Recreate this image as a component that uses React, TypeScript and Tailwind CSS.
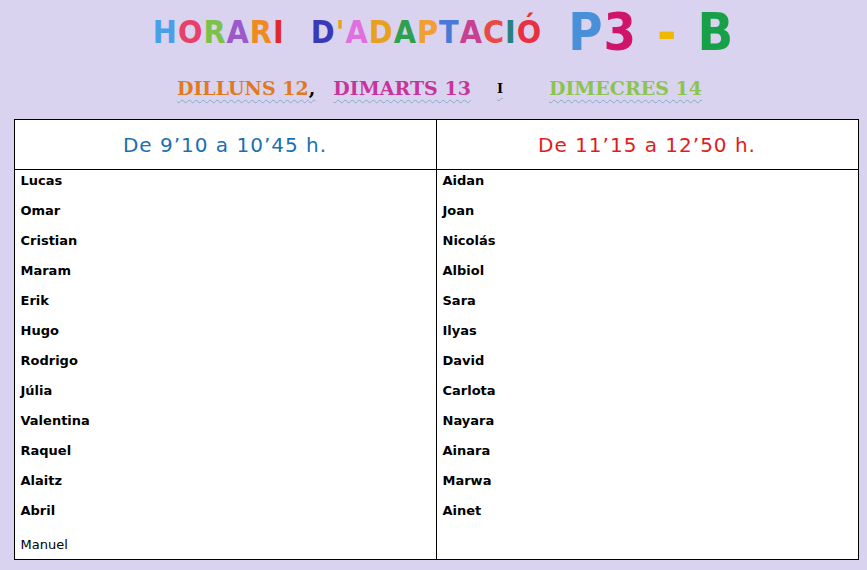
const title1: [string, string][] = [
  ["H", "#4aa0e8"], ["O", "#e8406a"], ["R", "#7cc24a"], ["A", "#9b59c9"], ["R", "#f08a20"], ["I", "#e02828"],
];
const title2: [string, string][] = [
  ["D", "#3a3ab8"], ["'", "#e8a020"], ["A", "#e070e0"], ["D", "#e8a020"], ["A", "#2ea050"], ["P", "#f0a030"],
  ["T", "#4a7ad8"], ["A", "#c84090"], ["C", "#e84a4a"], ["I", "#2a8080"], ["Ó", "#e83040"],
];

const left = ["Lucas", "Omar", "Cristian", "Maram", "Erik", "Hugo", "Rodrigo", "Júlia", "Valentina", "Raquel", "Alaitz", "Abril"];
const right = ["Aidan", "Joan", "Nicolás", "Albiol", "Sara", "Ilyas", "David", "Carlota", "Nayara", "Ainara", "Marwa", "Ainet"];

const Word = ({ letters }: { letters: [string, string][] }) => (
  <span className="flex">
    {letters.map(([l, c], i) => (
      <span key={i} style={{ color: c }}>{l}</span>
    ))}
  </span>
);

export default function App() {
  return (
    <div className="w-[867px] h-[570px] bg-[#d9d3ef] overflow-hidden flex flex-col items-center" style={{ fontFamily: '"DejaVu Sans", sans-serif' }}>
      <div className="h-[62px] flex items-end gap-[26px] pb-[6px] pl-[20px] font-bold text-[32px] tracking-[1px]" style={{ fontFamily: '"DejaVu Sans Condensed", "DejaVu Sans", sans-serif' }}>
        <Word letters={title1} />
        <Word letters={title2} />
        <span className="flex items-end gap-[20px] text-[52px] leading-[56px] -mb-[4px]">
          <span className="flex"><span className="text-[#4a90d8]">P</span><span className="text-[#d0146a]">3</span></span>
          <span className="text-[#f0b800]">-</span>
          <span className="text-[#18a048]">B</span>
        </span>
      </div>
      <div className="h-[57px] flex items-start pt-[12px] pl-[12px] text-[19px] font-bold underline decoration-wavy decoration-[#8aa8c8] decoration-1 underline-offset-4" style={{ fontFamily: '"DejaVu Serif", serif' }}>
        <span className="text-[#e07a20]">DILLUNS 12</span>
        <span className="text-black">,</span>
        <span className="text-[#c8359a] ml-[18px]">DIMARTS 13</span>
        <span className="text-black text-[13px] mx-[26px] mt-[5px]">I</span>
        <span className="text-[#8cc450] ml-[20px]">DIMECRES 14</span>
      </div>
      <div className="w-[845px] h-[441px] ml-[5px] bg-white border border-black grid grid-cols-[422px_1fr] grid-rows-[50px_1fr] text-[13px] font-bold text-black">
        <div className="border-r border-b border-black flex items-center justify-center text-[20px] font-normal text-[#1a6fb0] tracking-[1px]">De 9’10 a 10’45 h.</div>
        <div className="border-b border-black flex items-center justify-center text-[20px] font-normal text-[#e01c1c] tracking-[1px]">De 11’15 a 12’50 h.</div>
        <div className="border-r border-black pt-[3px] pl-[6px]">
          {left.map((n) => (
            <div key={n} className="h-[30px] leading-[16px]">{n}</div>
          ))}
          <div className="leading-[16px] pt-[4px] font-normal">Manuel</div>
        </div>
        <div className="pt-[3px] pl-[6px]">
          {right.map((n) => (
            <div key={n} className="h-[30px] leading-[16px]">{n}</div>
          ))}
        </div>
      </div>
    </div>
  );
}
